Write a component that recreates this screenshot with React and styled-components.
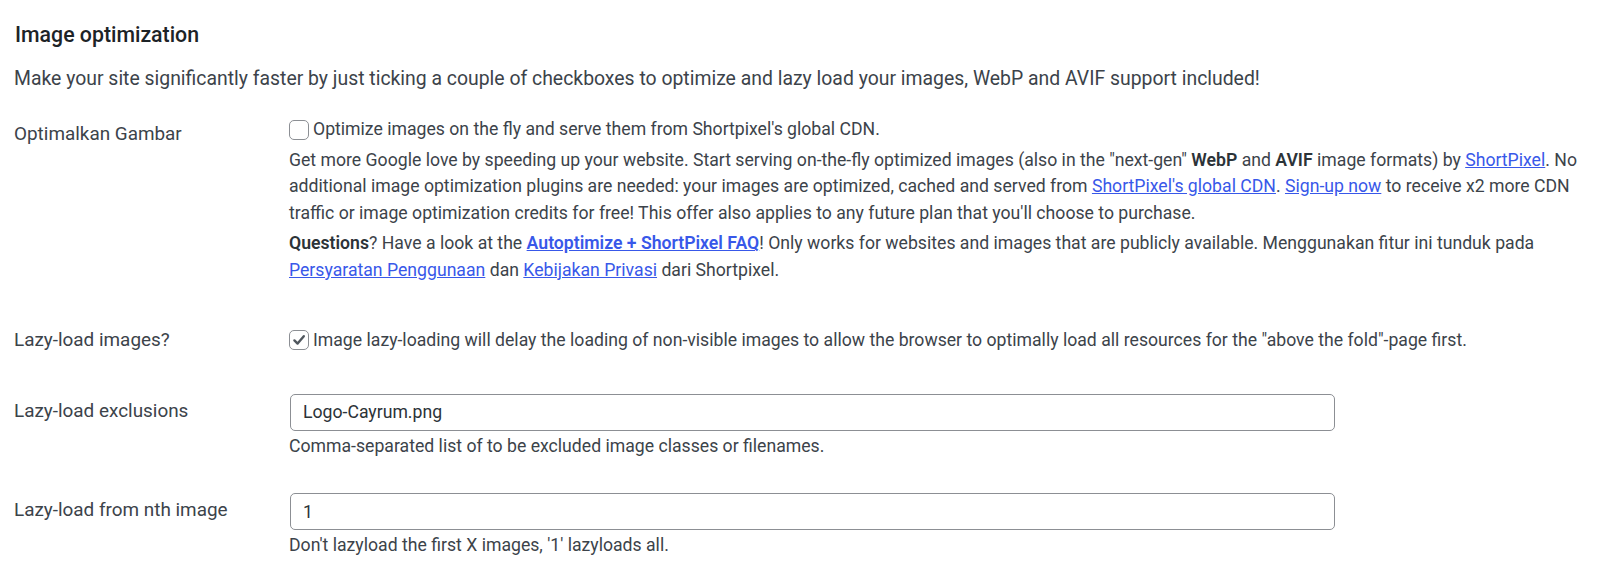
import React from "react";
import styled, { createGlobalStyle } from "styled-components";

const GlobalStyle = createGlobalStyle`
  body {
    margin: 0;
    background: #fff;
    font-family: Roboto, "Liberation Sans", sans-serif;
    color: #3c434a;
  }
`;

const Page = styled.div`
  padding: 0 22px 16px 14px;
`;

const Title = styled.h2`
  margin: 21px 0 0 1px;
  font-size: 21.3px;
  line-height: 27px;
  font-weight: 500;
  color: #1d2327;
`;

const Lead = styled.p`
  margin: 18px 0 0;
  font-size: 19.4px;
  line-height: 26px;
`;

const Row = styled.div`
  display: grid;
  grid-template-columns: 275px 1fr;
  margin-top: ${({ $gap }) => $gap}px;
`;

const Label = styled.div`
  padding-top: ${({ $offset }) => $offset || 0}px;
  font-size: 18.9px;
  line-height: 26px;
  color: #3c434a;
`;

const Field = styled.div`
  font-size: 17.65px;
  line-height: 26.25px;
`;

const CheckLine = styled.label`
  display: flex;
  align-items: center;
  gap: 4px;
  height: 26px;
  cursor: pointer;
`;

const Box = styled.span`
  display: inline-flex;
  align-items: center;
  justify-content: center;
  width: 20px;
  height: 20px;
  box-sizing: border-box;
  border: 1px solid #8c8f94;
  border-radius: 5px;
  background: #fff;
  flex-shrink: 0;
`;

const Text = styled.p`
  margin: 4.5px 0 0;
`;

const Help = styled.p`
  margin: 2px 0 0;
`;

const Link = styled.a`
  color: #3858e9;
  text-decoration: underline;
`;

const Strong = styled.b`
  font-weight: 600;
  color: ${({ $inLink }) => ($inLink ? "inherit" : "#2c3338")};
`;

const TextInput = styled.input`
  display: block;
  box-sizing: border-box;
  width: 1045px;
  height: 37px;
  margin: 0 0 0 1px;
  padding: 0 12px;
  border: 1px solid #8c8f94;
  border-radius: 5px;
  background: #fff;
  font-family: inherit;
  font-size: 17.65px;
  color: #2c3338;
  outline: none;
`;

function Checkbox({ checked }) {
  return (
    <Box>
      {checked && (
        <svg width="16" height="16" viewBox="0 0 16 16" aria-hidden="true">
          <path
            d="M3.4 8.4 L6.6 11.6 L12.8 4.2"
            fill="none"
            stroke="#50575e"
            strokeWidth="2.4"
            strokeLinecap="round"
            strokeLinejoin="round"
          />
        </svg>
      )}
    </Box>
  );
}

export default function App() {
  return (
    <Page>
      <GlobalStyle />
      <Title>Image optimization</Title>
      <Lead>
        Make your site significantly faster by just ticking a couple of checkboxes to optimize and lazy load your
        images, WebP and AVIF support included!
      </Lead>

      <Row $gap={24.5}>
        <Label $offset={4}>Optimalkan Gambar</Label>
        <Field>
          <CheckLine>
            <Checkbox />
            Optimize images on the fly and serve them from Shortpixel's global CDN.
          </CheckLine>
          <Text>
            Get more Google love by speeding up your website. Start serving on-the-fly optimized images (also in the
            "next-gen" <Strong>WebP</Strong> and <Strong>AVIF</Strong> image formats) by <Link href="#">ShortPixel</Link>.
            No additional image optimization plugins are needed: your images are optimized, cached and served from{" "}
            <Link href="#">ShortPixel's global CDN</Link>. <Link href="#">Sign-up now</Link> to receive x2 more CDN
            traffic or image optimization credits for free! This offer also applies to any future plan that you'll
            choose to purchase.
          </Text>
          <Text>
            <Strong>Questions</Strong>? Have a look at the{" "}
            <Link href="#">
              <Strong $inLink>Autoptimize + ShortPixel FAQ</Strong>
            </Link>
            ! Only works for websites and images that are publicly available. Menggunakan fitur ini tunduk pada{" "}
            <Link href="#">Persyaratan Penggunaan</Link> dan <Link href="#">Kebijakan Privasi</Link> dari Shortpixel.
          </Text>
        </Field>
      </Row>

      <Row $gap={44}>
        <Label>Lazy-load images?</Label>
        <Field>
          <CheckLine>
            <Checkbox checked />
            Image lazy-loading will delay the loading of non-visible images to allow the browser to optimally load all
            resources for the "above the fold"-page first.
          </CheckLine>
        </Field>
      </Row>

      <Row $gap={41}>
        <Label $offset={4.5}>Lazy-load exclusions</Label>
        <Field>
          <TextInput type="text" defaultValue="Logo-Cayrum.png" />
          <Help>Comma-separated list of to be excluded image classes or filenames.</Help>
        </Field>
      </Row>

      <Row $gap={34}>
        <Label $offset={4}>Lazy-load from nth image</Label>
        <Field>
          <TextInput type="text" defaultValue="1" />
          <Help>Don't lazyload the first X images, '1' lazyloads all.</Help>
        </Field>
      </Row>
    </Page>
  );
}
